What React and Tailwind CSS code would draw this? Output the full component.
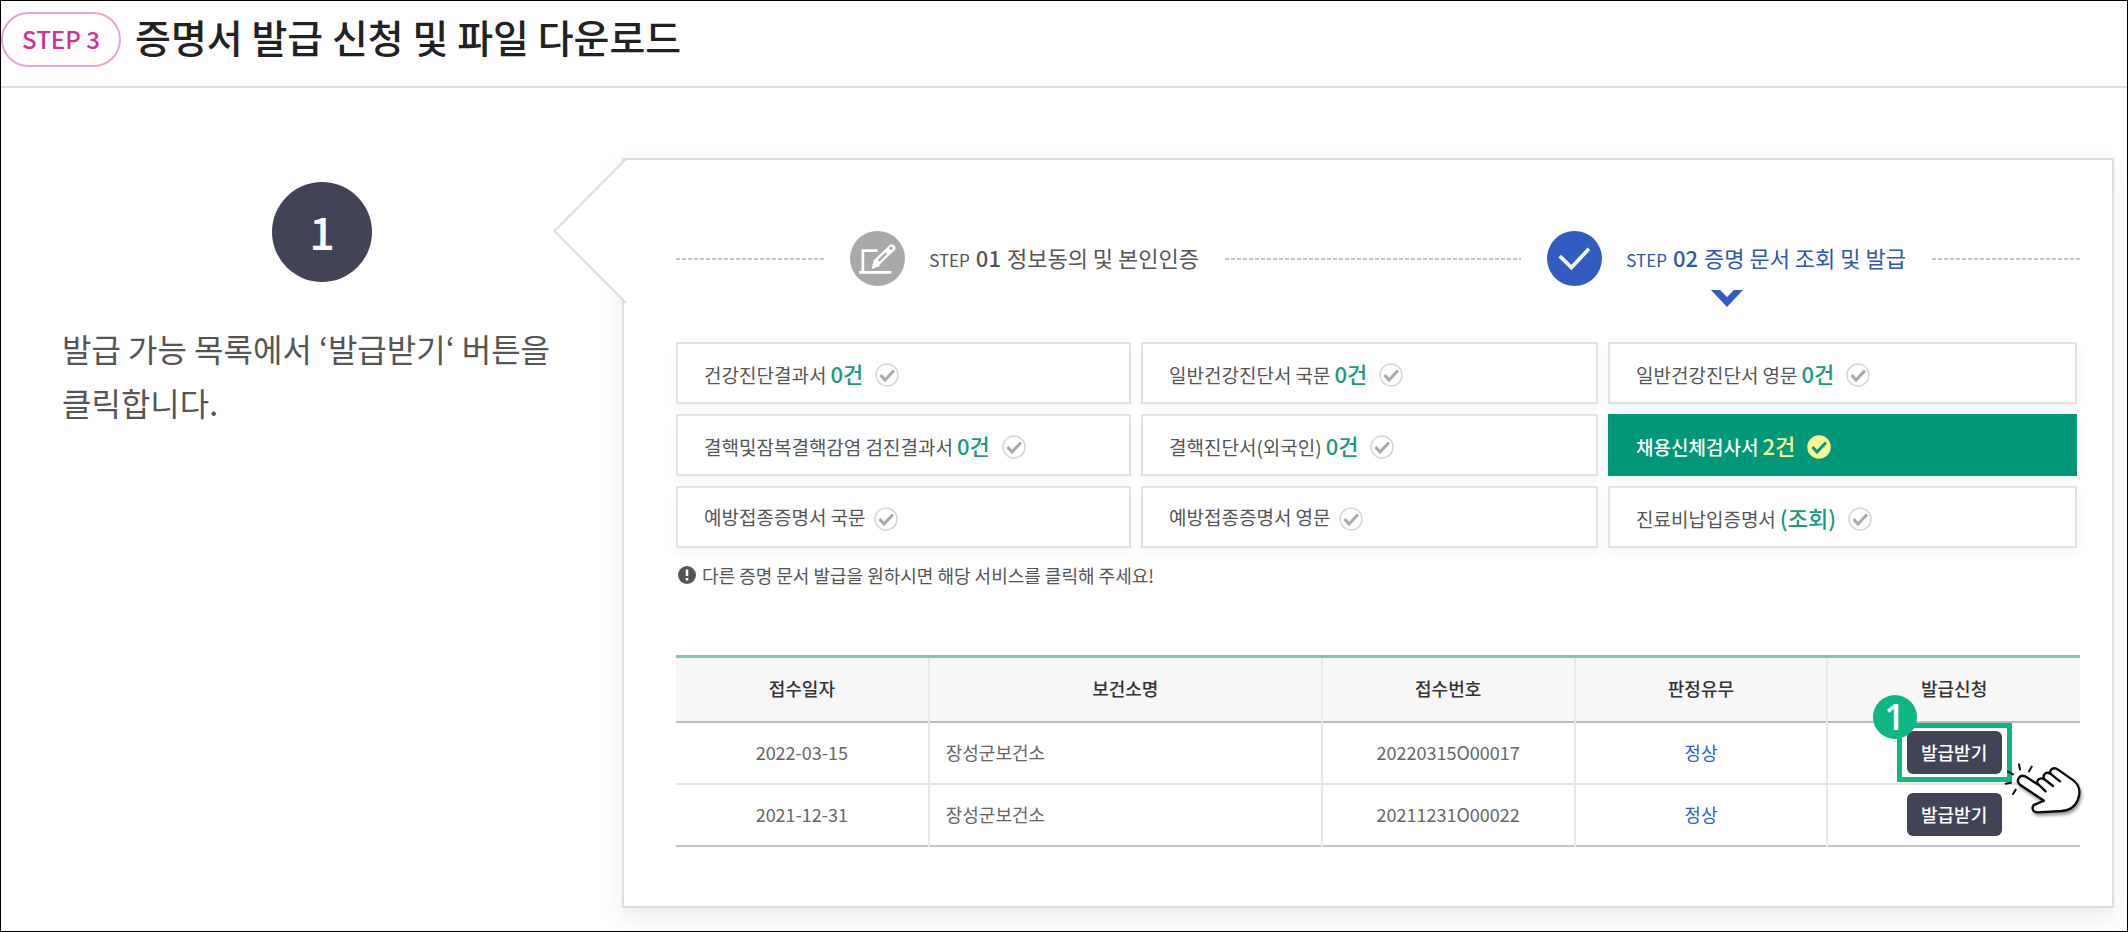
import React, { useState } from 'react';

const documents = [
  { name: '건강진단결과서', count: '0건' },
  { name: '일반건강진단서 국문', count: '0건' },
  { name: '일반건강진단서 영문', count: '0건' },
  { name: '결핵및잠복결핵감염 검진결과서', count: '0건' },
  { name: '결핵진단서(외국인)', count: '0건' },
  { name: '채용신체검사서', count: '2건' },
  { name: '예방접종증명서 국문' },
  { name: '예방접종증명서 영문' },
  { name: '진료비납입증명서', count: '(조회)' },
];

const receipts = [
  { date: '2022-03-15', center: '장성군보건소', number: '20220315O00017', result: '정상' },
  { date: '2021-12-31', center: '장성군보건소', number: '20211231O00022', result: '정상' },
];

const DashedLine = ({ className }) => (
  <div className={`h-0.5 bg-[repeating-linear-gradient(90deg,#c4c4c4_0_4px,transparent_4px_6px)] ${className}`} />
);

const CheckBadge = ({ active }) => (
  <svg className="w-6 h-6 mt-1 shrink-0" viewBox="0 0 24 24" fill="none" aria-hidden="true">
    <circle cx="12" cy="12" r="11" fill={active ? '#fbf98f' : '#fff'} stroke={active ? '#fbf98f' : '#d6d6d6'} strokeWidth="1.5" />
    <path d="M5.5 12l4.5 5 9-9.5" stroke={active ? '#009879' : '#a8a8a8'} strokeWidth="3" />
  </svg>
);

const HandPointer = () => (
  <svg
    className="absolute z-20 top-[19px] left-[83px] w-[100px] h-20 max-w-none pointer-events-none"
    viewBox="0 0 300 240"
    fill="none"
    stroke="#0a0a0a"
    strokeWidth="7"
    strokeLinecap="round"
    strokeLinejoin="round"
    aria-hidden="true"
  >
    <path
      className="drop-shadow-[4px_8px_5px_rgba(0,0,0,0.4)]"
      d="M162 152L90 104C76 92 88 72 105 79L145 104C137 92 147 81 162 87C157 73 169 64 181 71C178 57 192 50 204 59L250 91C264 102 271 120 267 137C262 163 243 180 215 183L143 187C125 187 122 166 139 162Z"
      fill="#fff"
    />
    <path d="M145 103L167 124M162 87L189 108M181 71L210 94" />
    <path d="M87 43L90 59M125 50L117 64M54 65L69 73M47 101L63 98M77 119L69 132" strokeWidth="6" />
  </svg>
);

const App = () => {
  const [selected, setSelected] = useState(5);

  return (
    <div className="min-h-screen border border-black bg-white text-[#555] font-['Noto_Sans_CJK_KR',sans-serif]">

      {/* Title bar */}
      <header className="flex items-start gap-3.5 pt-[11px] h-[87px] border-b-2 border-[#ddd]">
        <span className="flex items-center justify-center w-[120px] h-[55px] border-2 border-[#e5a6d3] rounded-full text-2xl font-medium text-[#d0309a] pb-0.5">STEP 3</span>
        <h1 className="text-[39px] leading-[48px] font-medium text-[#222]">증명서 발급 신청 및 파일 다운로드</h1>
      </header>

      <main className="flex pt-[70px] pr-[13px] pb-[22px]">

        {/* Instruction */}
        <section className="w-[621px] shrink-0 pt-6 pl-[61px]">
          <div className="flex items-center justify-center ml-[210px] w-[100px] h-[100px] rounded-full bg-[#434358] text-white text-[45px] font-medium pb-0.5">1</div>
          <p className="mt-[39px] text-[32px] leading-[54px]">
            발급 가능 목록에서 ‘발급받기‘ 버튼을<br />클릭합니다.
          </p>
        </section>

        {/* Panel */}
        <section className="relative flex-1 min-w-0 border-2 border-[#ddd] bg-white shadow-[0_10px_24px_rgba(60,70,100,0.1)] pl-[52px] pr-8 pt-[71px] pb-[59px]">
          <svg className="absolute -top-0.5 -left-[71px] w-[74px] h-[148px]" viewBox="0 0 74 148" aria-hidden="true">
            <path d="M73 1L1.5 73L73 145" fill="#fff" stroke="#ddd" strokeWidth="2" />
          </svg>

          <div className="flex items-center gap-[26px]">
            <DashedLine className="flex-1" />
            <div className="flex items-center gap-6">
              <svg className="w-[55px] h-[55px]" viewBox="0 0 162 162" fill="none" aria-hidden="true">
                <circle cx="81" cy="81" r="81" fill="#a9a9a9" />
                <path d="M81 58H38V120M27 122H122" stroke="#fff" strokeWidth="8" />
                <path d="M83 88L123 50" stroke="#fff" strokeWidth="21" strokeLinecap="round" />
                <path d="M64 112L70 84L90 102Z" fill="#fff" />
                <path d="M84 88L107 65" stroke="#a9a9a9" strokeWidth="7" />
                <circle cx="121" cy="51" r="5" fill="#a9a9a9" />
              </svg>
              <p className="flex items-baseline pb-0.5 text-[22px]">
                <span className="text-[17px]">STEP</span>
                <b className="mx-1.5 font-medium">01</b>정보동의 및 본인인증
              </p>
            </div>
            <DashedLine className="flex-2" />
            <div className="relative flex items-center gap-6 text-[#2f55b5]">
              <svg className="w-[55px] h-[55px]" viewBox="0 0 164 164" fill="none" aria-hidden="true">
                <circle cx="82" cy="82" r="82" fill="#315dc2" />
                <path d="M38 75L73 109L125 53" stroke="#fff" strokeWidth="11" />
              </svg>
              <p className="flex items-baseline pb-0.5 text-[22px]">
                <span className="text-[17px]">STEP</span>
                <b className="mx-1.5 font-medium">02</b>증명 문서 조회 및 발급
              </p>
              <svg className="absolute top-[59px] left-1/2 -translate-x-1/2 w-8 h-[18px]" viewBox="0 0 32 18" fill="#315dc2" aria-hidden="true">
                <path d="M0 0H9L16 7L23 0H32L16 17Z" />
              </svg>
            </div>
            <DashedLine className="flex-1" />
          </div>

          {/* Document types */}
          <div className="grid grid-cols-[455fr_457fr_469fr] gap-2.5 mt-14 mr-[3px]">
            {documents.map((doc, i) => {
              const active = i === selected;
              return (
                <button
                  key={doc.name}
                  onClick={() => setSelected(i)}
                  className={`flex items-center gap-2 h-[62px] px-[26px] border-2 text-[19px] shadow-[0_5px_8px_rgba(60,70,100,0.06)] ${active ? 'bg-[#009879] border-[#009879] text-white font-medium' : 'bg-white border-[#e2e2e2]'}`}
                >
                  <span className="whitespace-nowrap">
                    {doc.name}
                    {doc.count && <strong className={`mx-1 text-[22px] font-medium ${active ? 'text-[#fbf98f]' : 'text-[#1a9a7e]'}`}>{doc.count}</strong>}
                  </span>
                  <CheckBadge active={active} />
                </button>
              );
            })}
          </div>

          <p className="flex items-center gap-1.5 mt-3 pl-0.5 text-lg leading-[30px]">
            <svg className="w-[18px] h-[18px]" viewBox="0 0 18 18" aria-hidden="true">
              <circle cx="9" cy="9" r="9" fill="#555" />
              <path d="M9 3.5V10M9 12V14.5" stroke="#fff" strokeWidth="2.5" />
            </svg>
            다른 증명 문서 발급을 원하시면 해당 서비스를 클릭해 주세요!
          </p>

          {/* Receipts */}
          <table className="w-full mt-[65px] table-fixed border-collapse border-t-3 border-t-[#7fc6b8] border-b-2 border-b-[#c4c4c4] text-lg text-center">
            <thead>
              <tr className="h-[65px] bg-[#f7f7f7] border-b-2 border-[#bbb] text-[#333]">
                <th className="w-[18%] pb-0.5 font-medium">접수일자</th>
                <th className="w-[28%] pb-0.5 font-medium border-l-2 border-l-[#e8e8e8]">보건소명</th>
                <th className="w-[18%] pb-0.5 font-medium border-l-2 border-l-[#e8e8e8]">접수번호</th>
                <th className="w-[18%] pb-0.5 font-medium border-l-2 border-l-[#e8e8e8]">판정유무</th>
                <th className="w-[18%] pb-0.5 font-medium border-l-2 border-l-[#e8e8e8]">발급신청</th>
              </tr>
            </thead>
            <tbody>
              {receipts.map((row, i) => (
                <tr key={row.number} className="h-[62px] border-t-2 border-t-[#e4e4e4] text-[#666]">
                  <td className="pb-0.5">{row.date}</td>
                  <td className="pb-0.5 pl-4 text-left border-l-2 border-l-[#e8e8e8]">{row.center}</td>
                  <td className="pb-0.5 border-l-2 border-l-[#e8e8e8]">{row.number}</td>
                  <td className="pb-0.5 border-l-2 border-l-[#e8e8e8] text-[#2f5fdc]">{row.result}</td>
                  <td className="border-l-2 border-l-[#e8e8e8]">
                    <div className="relative inline-block align-middle">
                      <button className="block w-[95px] h-[43px] pb-0.5 rounded-md bg-[#434358] text-white font-medium">발급받기</button>
                      {i === 0 && (
                        <>
                          <span className="absolute -inset-x-2.5 -inset-y-2 border-5 border-[#0cb785] pointer-events-none" />
                          <span className="absolute -top-9 -left-[34px] flex items-center justify-center w-11 h-11 rounded-full bg-[#0cb785] text-white text-4xl font-semibold font-['Open_Sans',sans-serif]">1</span>
                          <HandPointer />
                        </>
                      )}
                    </div>
                  </td>
                </tr>
              ))}
            </tbody>
          </table>
        </section>
      </main>
    </div>
  );
};

export default App;
